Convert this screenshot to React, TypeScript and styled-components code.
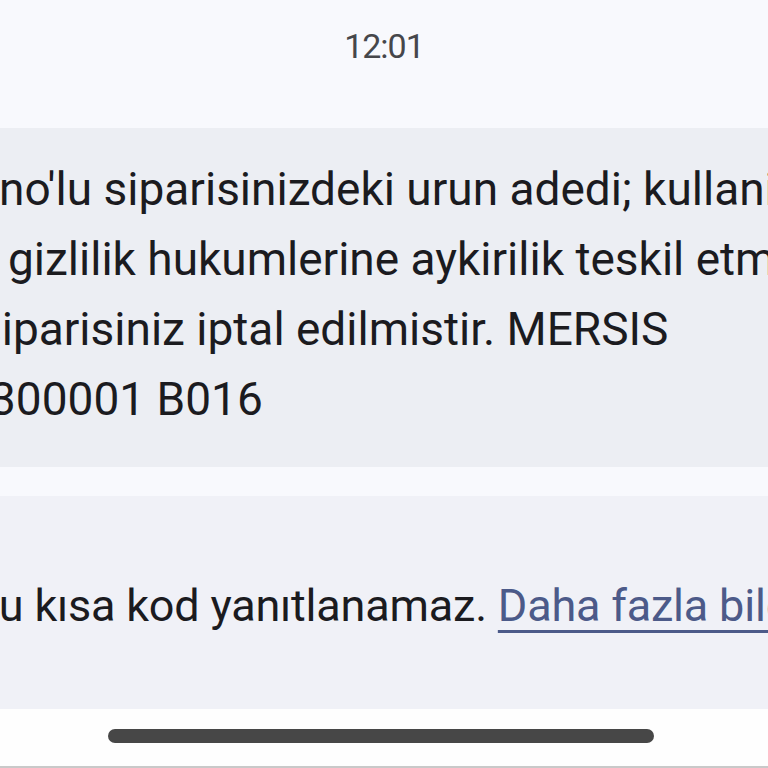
import React from "react";
import styled, { createGlobalStyle } from "styled-components";

const GlobalStyle = createGlobalStyle`
  html, body {
    margin: 0;
    padding: 0;
    background: #f8f9fd;
  }
  * {
    box-sizing: border-box;
  }
`;

const Screen = styled.div`
  width: 768px;
  height: 768px;
  display: flex;
  flex-direction: column;
  overflow: hidden;
  background: #f8f9fd;
  font-family: Roboto, "Noto Sans", sans-serif;
`;

const TimeBar = styled.div`
  height: 128px;
  display: flex;
  justify-content: center;
  padding-top: 26px;
  font-size: 34px;
  letter-spacing: -1px;
  color: #46474b;
`;

const Bubble = styled.div`
  height: 339px;
  background: #eceef3;
  padding-top: 26px;
  overflow: hidden;
`;

const Line = styled.div<{ $shift: number }>`
  white-space: nowrap;
  font-size: 46px;
  line-height: 70px;
  color: #1b1b1f;
  margin-left: ${(p) => p.$shift}px;
`;

const Gap = styled.div`
  height: 29px;
  background: #f8f9fd;
`;

const Notice = styled.div`
  height: 213px;
  background: #f0f1f7;
  display: flex;
  align-items: center;
  overflow: hidden;
  padding-top: 6px;
`;

const NoticeText = styled.div`
  white-space: nowrap;
  font-size: 45px;
  color: #1b1b1f;
  margin-left: -29px;
  letter-spacing: -0.2px;
`;

const MoreLink = styled.a`
  color: #4c5a89;
  text-decoration: underline;
  text-decoration-thickness: 3px;
  text-underline-offset: 9px;
`;

const HomeArea = styled.div`
  flex: 1;
  background: #fefefe;
  display: flex;
  flex-direction: column;
  align-items: flex-start;
  padding-top: 20px;
  border-bottom: 2px solid #c9c9c9;
`;

const HomeIndicator = styled.div`
  width: 546px;
  height: 14px;
  margin-left: 108px;
  border-radius: 7px;
  background: #474747;
`;

const lines = [
  { shift: -1, text: "no'lu siparisinizdeki urun adedi; kullanim kosullari" },
  { shift: 8, text: "gizlilik hukumlerine aykirilik teskil etmektedir" },
  { shift: -22, text: "siparisiniz iptal edilmistir. MERSIS" },
  { shift: -10, text: "300001 B016" },
];

export default function App() {
  return (
    <>
      <GlobalStyle />
      <Screen>
        <TimeBar>12:01</TimeBar>
        <Bubble>
          {lines.map((l) => (
            <Line key={l.text} $shift={l.shift}>
              {l.text}
            </Line>
          ))}
        </Bubble>
        <Gap />
        <Notice>
          <NoticeText>
            Bu kısa kod yanıtlanamaz. <MoreLink href="#">Daha fazla bilgi</MoreLink>
          </NoticeText>
        </Notice>
        <HomeArea>
          <HomeIndicator />
        </HomeArea>
      </Screen>
    </>
  );
}
